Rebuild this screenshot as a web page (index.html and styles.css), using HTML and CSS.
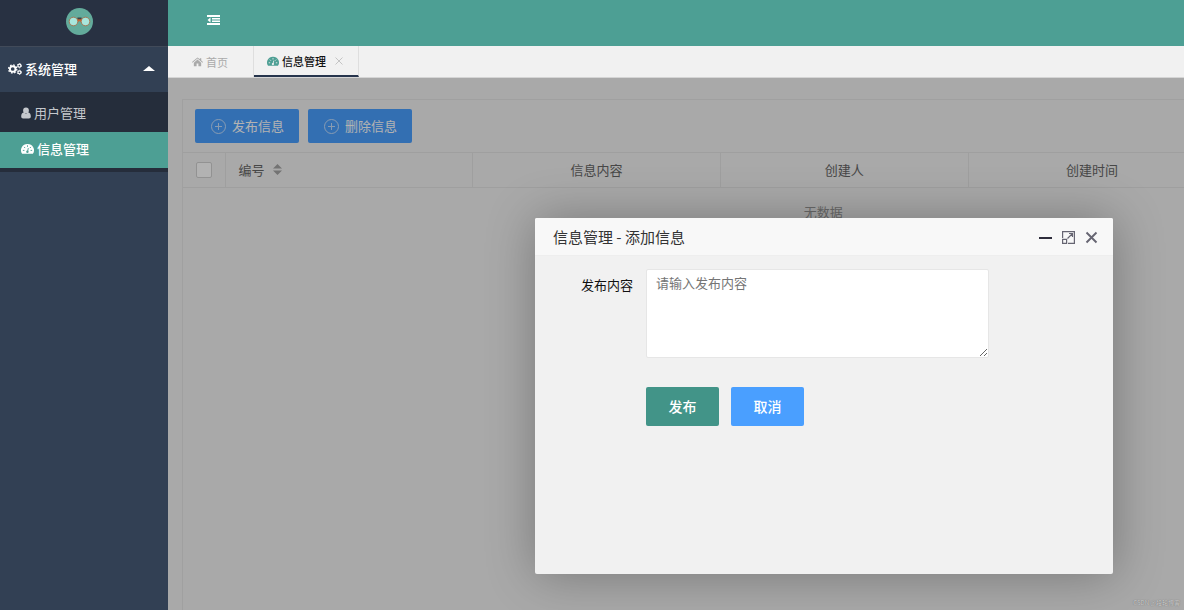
FILE: index.html
```html
<!DOCTYPE html>
<html lang="zh-CN">
<head>
<meta charset="utf-8">
<meta name="viewport" content="width=device-width, initial-scale=1">
<title>信息管理</title>
<link rel="stylesheet" href="styles.css">
</head>
<body>
<div class="app">
  <aside class="sidebar">
    <div class="brand">
      <svg class="logo" viewBox="0 0 27 27" aria-hidden="true">
        <circle cx="13.500" cy="13.500" r="13.500" fill="#63ab9b"/>
        <path d="M10 11.500l2-1.500h3l2 1.500 1 2-3 .5-1.500-1-1.500 1-3-.5z" fill="#d0642f"/>
        <path d="M11.500 9.500h4v1.800h-4z" fill="#38454a"/>
        <circle cx="7.500" cy="13.500" r="4.300" fill="#a8e6dc" stroke="#a5714c" stroke-width=".9"/>
        <circle cx="19.500" cy="13.500" r="4.300" fill="#a8e6dc" stroke="#a5714c" stroke-width=".9"/>
      </svg>
    </div>
    <nav class="menu">
      <a class="menu-group" href="#">
        <svg class="icon-gears" viewBox="0 0 14 12" aria-hidden="true">
          <g fill="none" stroke="currentColor">
            <circle cx="4.700" cy="6" r="2.800" stroke-width="1.900"/>
            <circle cx="4.700" cy="6" r="4.100" stroke-width="1.300" stroke-dasharray="1.650 1.570"/>
            <circle cx="11.400" cy="2.700" r="1.500" stroke-width="1.200"/>
            <circle cx="11.400" cy="2.700" r="2.200" stroke-width=".8" stroke-dasharray="1.150 1.150"/>
            <circle cx="11.400" cy="9.300" r="1.500" stroke-width="1.200"/>
            <circle cx="11.400" cy="9.300" r="2.200" stroke-width=".8" stroke-dasharray="1.150 1.150"/>
          </g>
        </svg>
        <span>系统管理</span>
        <i class="caret"></i>
      </a>
      <div class="submenu">
        <a class="menu-item" href="#">
          <svg class="icon-user" viewBox="0 0 10 12" aria-hidden="true"><path d="M5 .5a2.800 2.800 0 0 1 0 5.800 2.800 2.800 0 0 1 0-5.800zM2.500 5.600c1.500 1.400 3.500 1.400 5 0 1.500.2 2.300 1.800 2.300 3.900 0 1.300-.7 2-1.900 2H2.100c-1.200 0-1.900-.7-1.900-2 0-2.100.8-3.700 2.300-3.900z" fill="currentColor"/></svg>
          <span>用户管理</span>
        </a>
        <a class="menu-item active" href="#" aria-current="page">
          <svg class="icon-gauge" viewBox="0 0 14 12" aria-hidden="true"><path d="M7 .5a6.800 6.800 0 0 1 5.800 10.600H1.200A6.800 6.800 0 0 1 7 .5z" fill="currentColor"/><path class="gauge-marks" d="M2 7.500h1.700M3.300 3.800l1.200 1.200M7 2v1.700M10.700 3.800 9.500 5M10.300 7.500H12M7 9l.9-4"/><circle class="gauge-hub" cx="6.900" cy="9" r="1.300"/></svg>
          <span>信息管理</span>
        </a>
      </div>
    </nav>
  </aside>

  <div class="main">
    <header class="topbar">
      <button class="fold" type="button" aria-label="收起菜单">
        <svg class="icon-fold" viewBox="0 0 13 10" aria-hidden="true"><path d="M0 0h13v2H0zM5 3h8v1.500H5zM5 5.500h8V7H5zM0 8h13v2H0zM3.500 2.600v4.800L.5 5z" fill="currentColor"/></svg>
      </button>
    </header>
    <nav class="tabs">
      <a class="tab" href="#">
        <svg class="icon-home" viewBox="0 0 12 10" aria-hidden="true"><path d="M6 2.400l4 3.400V9.500H7V6.600H5v2.900H2V5.800zM6 0l2.600 2.100V.8h1.500v2.600L12 5l-.6.7L6 1.300.6 5.700 0 5z" fill="currentColor"/></svg>
        <span>首页</span>
      </a>
      <div class="tab current">
        <svg class="icon-gauge" viewBox="0 0 14 12" aria-hidden="true"><path d="M7 .5a6.800 6.800 0 0 1 5.800 10.600H1.200A6.800 6.800 0 0 1 7 .5z" fill="currentColor"/><path class="gauge-marks" d="M2 7.500h1.700M3.300 3.800l1.200 1.200M7 2v1.700M10.700 3.800 9.500 5M10.300 7.500H12M7 9l.9-4"/><circle class="gauge-hub" cx="6.900" cy="9" r="1.300"/></svg>
        <span>信息管理</span>
        <button class="tab-close" type="button" aria-label="关闭标签">
          <svg viewBox="0 0 8 8" aria-hidden="true"><path d="M.5.5l7 7m0-7l-7 7"/></svg>
        </button>
      </div>
    </nav>

    <main class="frame">
      <section class="card">
        <div class="toolbar">
          <button class="btn" type="button">
            <svg viewBox="0 0 15 15" aria-hidden="true"><circle cx="7.500" cy="7.500" r="7"/><path d="M4 7.500h7M7.500 4v7"/></svg>
            <span>发布信息</span>
          </button>
          <button class="btn" type="button">
            <svg viewBox="0 0 15 15" aria-hidden="true"><circle cx="7.500" cy="7.500" r="7"/><path d="M4 7.500h7M7.500 4v7"/></svg>
            <span>删除信息</span>
          </button>
        </div>
        <table class="grid">
          <thead>
            <tr>
              <th class="col-check"><input type="checkbox" class="check" aria-label="全选"></th>
              <th class="col-id"><span class="sortable">编号
                <svg viewBox="0 0 9 11" aria-hidden="true"><path d="M4.500 0L9 4.500H0zM0 6.500h9L4.500 11z" fill="currentColor"/></svg></span></th>
              <th>信息内容</th>
              <th>创建人</th>
              <th>创建时间</th>
              <th></th>
            </tr>
          </thead>
          <tbody>
            <tr><td class="empty" colspan="6">无数据</td></tr>
          </tbody>
        </table>
      </section>
      <div class="shade"></div>

      <div class="dialog" role="dialog" aria-labelledby="dialog-title">
        <div class="dialog-head">
          <h2 class="dialog-title" id="dialog-title">信息管理 - 添加信息</h2>
          <div class="dialog-tools">
            <button type="button" aria-label="最小化"><svg viewBox="0 0 13 13" aria-hidden="true"><path d="M0 7h13" stroke-width="2" stroke="#2e2d3c"/></svg></button>
            <button type="button" aria-label="最大化"><svg viewBox="0 0 13 13" aria-hidden="true"><path d="M.6 7V.6h11.800v11.800H6M.6 8.400h4v4h-4zM5.500 7.500l5-5M7 2.500h3.500V6" stroke-width="1.200"/></svg></button>
            <button type="button" aria-label="关闭"><svg viewBox="0 0 13 13" aria-hidden="true"><path d="M1.500 1.500l10 10M11.500 1.500l-10 10" stroke-width="1.900"/></svg></button>
          </div>
        </div>
        <form class="form">
          <label class="form-label" for="content">发布内容</label>
          <textarea class="form-text" id="content" placeholder="请输入发布内容"></textarea>
          <div class="form-actions">
            <button class="submit" type="button">发布</button>
            <button class="cancel" type="button">取消</button>
          </div>
        </form>
      </div>
      <small class="watermark">CSDN @段轮博客</small>
    </main>
  </div>
</div>
</body>
</html>
```
FILE: styles.css
```css
* { box-sizing: border-box; }

body {
  margin: 0;
  color: #666;
  font: 13px/20px "Noto Sans CJK SC", "Noto Sans", sans-serif;
}

button, textarea { font: inherit; }
button { padding: 0; border: 0; background: none; cursor: pointer; }
a { color: inherit; text-decoration: none; }
svg { display: block; flex: none; }

.app { display: flex; min-height: 100vh; }

.sidebar { flex: 0 0 168px; background: #324054; color: #fff; }
.brand {
  height: 47px;
  padding: 8px 0 0 66px;
  background: #283142;
  border-bottom: 1px solid #414a59;
}
.logo { width: 27px; height: 27px; }

.menu-group {
  display: flex;
  align-items: center;
  gap: 3px;
  height: 45px;
  padding: 0 13px 2px 8px;
  font-weight: 500;
}
.icon-gears { width: 14px; height: 12px; }
.caret {
  margin-left: auto;
  border: 6px solid transparent;
  border-top: 0;
  border-bottom: 5px solid #fff;
}
.submenu { padding: 4px 0; background: #252d3b; }
.menu-item {
  display: flex;
  align-items: center;
  gap: 3px;
  height: 36px;
  padding: 0 0 2px 21px;
  color: #c5c8cd;
}
.menu-item.active { background: #4d9f94; color: #fff; font-weight: 500; }
.icon-user { width: 10px; height: 12px; }
.icon-gauge { width: 13px; height: 12px; }
.gauge-marks { fill: none; stroke: #4d9f94; stroke-width: 1; }
.gauge-hub { fill: #4d9f94; }

.main { display: flex; flex: 1; flex-direction: column; min-width: 0; }
.topbar { height: 46px; background: #4d9f94; }
.fold { height: 40px; padding: 0 39px; color: #fff; }
.icon-fold { width: 13px; height: 10px; }

.tabs {
  display: flex;
  height: 32px;
  background: #f1f1f1;
  border-bottom: 1px solid #d5d5d5;
  font-size: 11px;
}
.tab {
  display: flex;
  align-items: center;
  gap: 3px;
  height: 31px;
  padding: 0 25px 0 24px;
  border-right: 1px solid #dedede;
  color: #aaa;
}
.icon-home { width: 11px; height: 10px; }
.tab.current {
  padding: 1px 15px 0 13px;
  border-bottom: 2px solid #26344c;
  color: #111;
  font-weight: 500;
}
.tab.current .icon-gauge { width: 12px; height: 11px; color: #4d9f94; }
.tab.current .gauge-marks { stroke: #f1f1f1; }
.tab.current .gauge-hub { fill: #f1f1f1; }
.tab-close { margin-left: 6px; }
.tab-close svg { width: 8px; height: 8px; fill: none; stroke: #c4c4c4; }

.frame {
  position: relative;
  flex: 1;
  overflow: hidden;
  padding: 21px 0 0 14px;
  background: #f2f2f2;
}
.card {
  width: 1283px;
  min-height: 100%;
  border: 1px solid #e6e6e6;
  border-bottom: 0;
}
.toolbar { display: flex; gap: 9px; padding: 9px 12px; }
.btn {
  display: flex;
  align-items: center;
  gap: 6px;
  height: 34px;
  padding: 0 15px 0 16px;
  border-radius: 2px;
  background: #4a9fff;
  color: #fff;
}
.btn svg { width: 15px; height: 15px; fill: none; stroke: #c3dfff; }

.grid { width: 100%; border-collapse: collapse; table-layout: fixed; }
.grid th {
  height: 35px;
  padding: 0 0 1px;
  border: 1px solid #e4e4e4;
  border-left: 0;
  font-weight: 400;
}
.grid .col-check { width: 42px; }
.grid .col-id { padding-left: 13px; }
.sortable { display: flex; align-items: center; gap: 8px; }
.sortable svg { width: 9px; height: 11px; color: #a5a5a5; }
.check {
  display: block;
  width: 16px;
  height: 16px;
  margin: 0 0 0 13px;
  border: 1px solid #d2d2d2;
  border-radius: 2px;
  background: #fff;
  appearance: none;
}
.empty { padding: 14px 0; color: #999; text-align: center; }
.shade { position: absolute; inset: 0; background: rgba(0, 0, 0, .3); }

/* Floating window above the shaded list */
.dialog {
  position: absolute;
  top: 140px;
  left: 367px;
  width: 578px;
  min-height: 356px;
  border-radius: 2px;
  background: #f1f1f1;
  box-shadow: 1px 1px 50px rgba(0, 0, 0, .3);
}
.dialog-head {
  display: flex;
  align-items: center;
  justify-content: space-between;
  height: 38px;
  padding: 0 15px 0 18px;
  border-bottom: 1px solid #eee;
  border-radius: 2px 2px 0 0;
  background: #f8f8f8;
}
.dialog-title { margin: 0; color: #333; font-size: 15px; font-weight: 400; }
.dialog-tools { display: flex; gap: 10px; padding-top: 2px; }
.dialog-tools svg { width: 13px; height: 13px; fill: none; stroke: #666572; }

.form {
  display: grid;
  grid-template-columns: 98px 343px;
  gap: 29px 13px;
  padding: 13px 0;
}
.form-label { padding-top: 6px; color: #111; text-align: right; }
.form-text {
  display: block;
  width: 100%;
  height: 89px;
  padding: 3px 9px;
  border: 1px solid #e6e6e6;
  border-radius: 2px;
  background: #fff;
  resize: vertical;
}
.form-text::placeholder { color: #757575; }
.form-actions { display: flex; grid-column: 2; gap: 12px; }
.form-actions button {
  width: 73px;
  height: 39px;
  padding-bottom: 2px;
  border-radius: 2px;
  color: #fff;
  font-size: 14px;
  font-weight: 500;
}
.submit { background: #429488; }
.cancel { background: #4a9fff; }

.watermark {
  position: absolute;
  right: 4px;
  bottom: 2px;
  color: #d0d0d0;
  font-size: 6px;
  line-height: 10px;
  text-shadow: 0 0 1px #555;
}
```
